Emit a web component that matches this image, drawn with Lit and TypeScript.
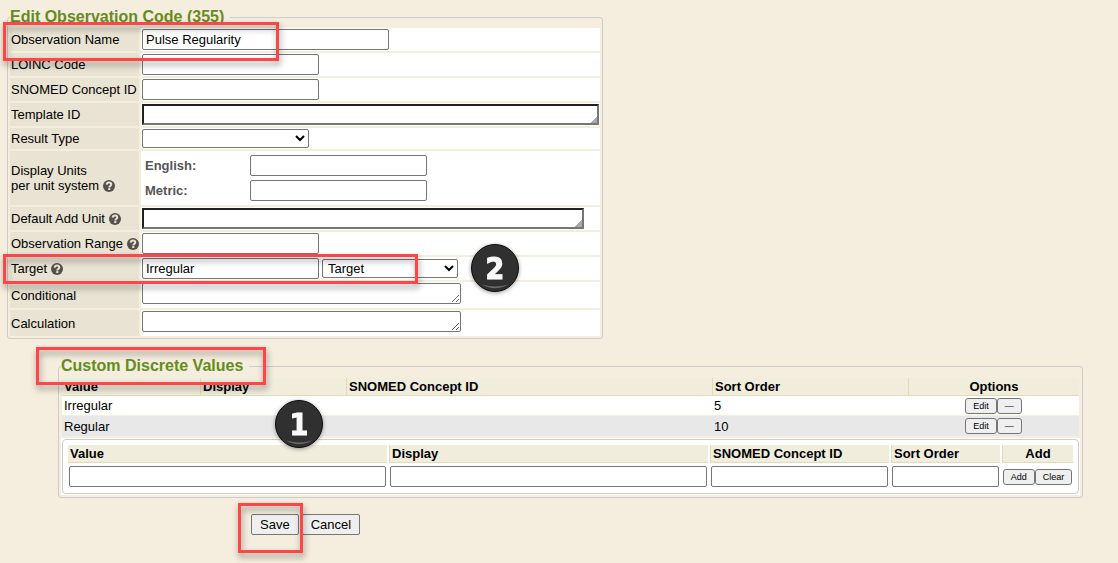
import { LitElement, html, css } from "lit";
import { customElement, property } from "lit/decorators.js";

@customElement("help-icon")
class HelpIcon extends LitElement {
  static styles = css`
    :host { display: inline-block; vertical-align: -2px; height: 12px; }
    .icon { display: block; width: 12px; height: 12px; }
  `;
  render() {
    return html`<svg class="icon" viewBox="0 0 24 24" role="img" aria-label="Help">
      <circle cx="12" cy="12" r="12" fill="#54524a" />
      <path d="M7.300 9.400c.3-3 2-4.400 4.700-4.400 2.700 0 4.500 1.600 4.500 3.900 0 3.200-3.900 3.100-3.900 5.900" fill="none" stroke="#e8e3d3" stroke-width="4" />
      <rect x="10.400" y="16.200" width="4.200" height="3.800" fill="#e8e3d3" />
    </svg>`;
  }
}

@customElement("step-badge")
class StepBadge extends LitElement {
  @property() label = "";
  static styles = css`
    :host { display: block; width: 50px; height: 50px; filter: drop-shadow(0 1px 2px rgba(0, 0, 0, 0.4)); }
    .disc { display: block; width: 50px; height: 50px; }
    .digit { font: bold 30px "DejaVu Sans Condensed", "DejaVu Sans", sans-serif; fill: #fafafa; stroke: #fafafa; stroke-width: 1px; }
  `;
  render() {
    return html`<svg class="disc" viewBox="0 0 50 50">
      <circle cx="25" cy="25" r="23.500" fill="#303030" stroke="#0c0c0c" />
      <path d="M12 41.500Q25 49 38 41.500Q25 45.500 12 41.500Z" fill="#6a6a6a" />
      <text class="digit" x="25" y="36" text-anchor="middle">${this.label}</text>
    </svg>`;
  }
}

const values = [
  { value: "Irregular", display: "", snomed: "", order: 5 },
  { value: "Regular", display: "", snomed: "", order: 10 },
];

@customElement("app-root")
class AppRoot extends LitElement {
  static styles = css`
    :host {
      display: block;
      position: relative;
      box-sizing: border-box;
      min-height: 100vh;
      padding: 8px 35px 8px 7px;
      background: #f5eddd;
      color: #000;
      font: 13px/15px "Liberation Sans", Arial, sans-serif;
    }
    * { box-sizing: border-box; }
    fieldset { margin: 0; padding: 2px; border: 1px solid #ccc; border-radius: 3px; min-width: 0; }
    legend { padding: 0 6px 0 0; color: #648c1c; font-size: 16px; font-weight: bold; line-height: 18px; }
    input, textarea, select {
      display: block;
      height: 21px;
      margin: 0;
      padding: 1px 3px;
      border: 1px solid #767676;
      border-radius: 2px;
      background: #fff;
      color: #000;
      font: inherit;
    }
    select { height: 19px; padding: 0 1px; }
    .code { width: fit-content; }
    .rows { display: grid; gap: 2px; }
    .row { display: grid; grid-template-columns: 129px 1fr; gap: 2px; min-height: 23px; }
    .row.low { min-height: 21px; }
    .row.tall { min-height: 26px; }
    .name { display: flex; align-items: center; padding: 0 1px; background: #e8e3d3; white-space: nowrap; }
    .field { display: flex; align-items: center; gap: 3px; padding: 1px; background: #fff; }
    .tall .field { align-items: flex-start; }
    .text { width: 177px; }
    .long { width: 247px; }
    .kind { width: 167px; }
    .goal { width: 136px; }
    .formula { width: 319px; }
    .picker {
      width: 457px;
      border: 2px solid;
      border-color: #212121 #767676 #767676 #212121;
      border-radius: 0;
      resize: none;
      overflow: hidden;
      background: linear-gradient(135deg, transparent 50%, #aaa 50%) right bottom / 7px 7px no-repeat #fff;
    }
    .unit { width: 442px; }
    .units { display: grid; grid-template-columns: 102px 177px; gap: 4px 3px; align-items: center; padding: 4px; background: #fff; color: #555; font-weight: bold; }
    .units input { font-weight: normal; }

    .values { margin: 18px 0 0 51px; padding: 3px 2px 2px; }
    .list, .adder { width: 100%; table-layout: fixed; }
    .list { border-collapse: separate; border-spacing: 0; padding: 0 1px; }
    th { height: 18px; padding: 0 2px; border-left: 1px solid #deddb8; border-bottom: 1px solid #deddb8; background: #f1eddd; text-align: left; }
    .list th:first-child, .adder th:first-child { border-left: 0; }
    td { padding: 0 2px; }
    .list td { height: 20px; }
    .list tbody tr { background: #fff; }
    .list tbody tr:nth-child(even) { background: #e8e8e8; }
    .list tbody tr:first-child td { border-bottom: 1px solid #f1f3d4; }
    .list .center, .adder .center { text-align: center; }
    .pair { display: flex; justify-content: center; }
    .c1 { width: 138px; }
    .c2 { width: 146px; }
    .c4 { width: 196px; }
    .c5 { width: 171px; }
    .panel { margin-top: 2px; padding: 1px; background: #fff; }
    .group { padding: 3px; border: 1px solid #ccc; border-radius: 4px; }
    .adder { border-collapse: separate; border-spacing: 2px; }
    .adder td { padding: 1px; }
    .adder input { width: 100%; }
    .a3 { width: 179px; }
    .a4 { width: 109px; }
    .a5 { width: 71px; }

    button { height: 21px; margin: 0; padding: 0 8px; border: 1px solid #767676; border-radius: 2px; background: #efefef; color: #000; font: inherit; white-space: nowrap; }
    .mini { height: 16px; padding: 0 7px; border-radius: 3px; font-size: 9px; line-height: 12px; }
    .actions { display: flex; gap: 3px; margin: 16px 0 0 244px; }

    .mark { position: absolute; border: 3px solid #ff4545; filter: drop-shadow(1px 4px 3px rgba(0, 0, 0, 0.4)); pointer-events: none; }
    .mark-name { left: 3px; top: 22px; width: 276px; height: 39px; }
    .mark-target { left: 3px; top: 254px; width: 415px; height: 30px; }
    .mark-values { left: 36px; top: 347px; width: 230px; height: 38px; }
    .mark-save { left: 238px; top: 503px; width: 65px; height: 50px; }
    .step { position: absolute; }
    .step-one { left: 274px; top: 399px; }
    .step-two { left: 470px; top: 243px; }
  `;

  render() {
    return html`
      <fieldset class="code">
        <legend>Edit Observation Code (355)</legend>
        <div class="rows">
          <div class="row"><label class="name" for="name">Observation Name</label><div class="field"><input id="name" class="long" .value=${"Pulse Regularity"} /></div></div>
          <div class="row"><label class="name" for="loinc">LOINC Code</label><div class="field"><input id="loinc" class="text" /></div></div>
          <div class="row"><label class="name" for="snomed">SNOMED Concept ID</label><div class="field"><input id="snomed" class="text" /></div></div>
          <div class="row"><label class="name" for="template">Template ID</label><div class="field"><textarea id="template" class="picker"></textarea></div></div>
          <div class="row low"><label class="name" for="type">Result Type</label><div class="field"><select id="type" class="kind"><option></option></select></div></div>
          <div class="row">
            <div class="name"><span>Display Units<br />per unit system <help-icon></help-icon></span></div>
            <div class="units">
              <label for="english">English:</label><input id="english" class="text" />
              <label for="metric">Metric:</label><input id="metric" class="text" />
            </div>
          </div>
          <div class="row"><label class="name" for="unit"><span>Default Add Unit <help-icon></help-icon></span></label><div class="field"><textarea id="unit" class="picker unit"></textarea></div></div>
          <div class="row"><label class="name" for="range"><span>Observation Range <help-icon></help-icon></span></label><div class="field"><input id="range" class="text" /></div></div>
          <div class="row"><label class="name" for="target"><span>Target <help-icon></help-icon></span></label><div class="field"><input id="target" class="text" .value=${"Irregular"} /><select class="goal" aria-label="Target type"><option>Target</option></select></div></div>
          <div class="row tall"><label class="name" for="cond">Conditional</label><div class="field"><textarea id="cond" class="formula"></textarea></div></div>
          <div class="row tall"><label class="name" for="calc">Calculation</label><div class="field"><textarea id="calc" class="formula"></textarea></div></div>
        </div>
      </fieldset>

      <fieldset class="values">
        <legend>Custom Discrete Values</legend>
        <table class="list">
          <colgroup><col class="c1" /><col class="c2" /><col /><col class="c4" /><col class="c5" /></colgroup>
          <thead><tr><th>Value</th><th>Display</th><th>SNOMED Concept ID</th><th>Sort Order</th><th class="center">Options</th></tr></thead>
          <tbody>
            ${values.map((v) => html`<tr>
              <td>${v.value}</td><td>${v.display}</td><td>${v.snomed}</td><td>${v.order}</td>
              <td><div class="pair"><button class="mini">Edit</button><button class="mini" aria-label="Remove">—</button></div></td>
            </tr>`)}
          </tbody>
        </table>
        <div class="panel"><div class="group">
          <table class="adder">
            <colgroup><col /><col /><col class="a3" /><col class="a4" /><col class="a5" /></colgroup>
            <thead><tr><th>Value</th><th>Display</th><th>SNOMED Concept ID</th><th>Sort Order</th><th class="center">Add</th></tr></thead>
            <tbody><tr>
              <td><input aria-label="Value" /></td>
              <td><input aria-label="Display" /></td>
              <td><input aria-label="SNOMED Concept ID" /></td>
              <td><input aria-label="Sort Order" /></td>
              <td><div class="pair"><button class="mini">Add</button><button class="mini">Clear</button></div></td>
            </tr></tbody>
          </table>
        </div></div>
      </fieldset>

      <div class="actions"><button>Save</button><button>Cancel</button></div>

      <div class="mark mark-name"></div>
      <div class="mark mark-target"></div>
      <div class="mark mark-values"></div>
      <div class="mark mark-save"></div>
      <step-badge class="step step-one" label="1"></step-badge>
      <step-badge class="step step-two" label="2"></step-badge>
    `;
  }
}
